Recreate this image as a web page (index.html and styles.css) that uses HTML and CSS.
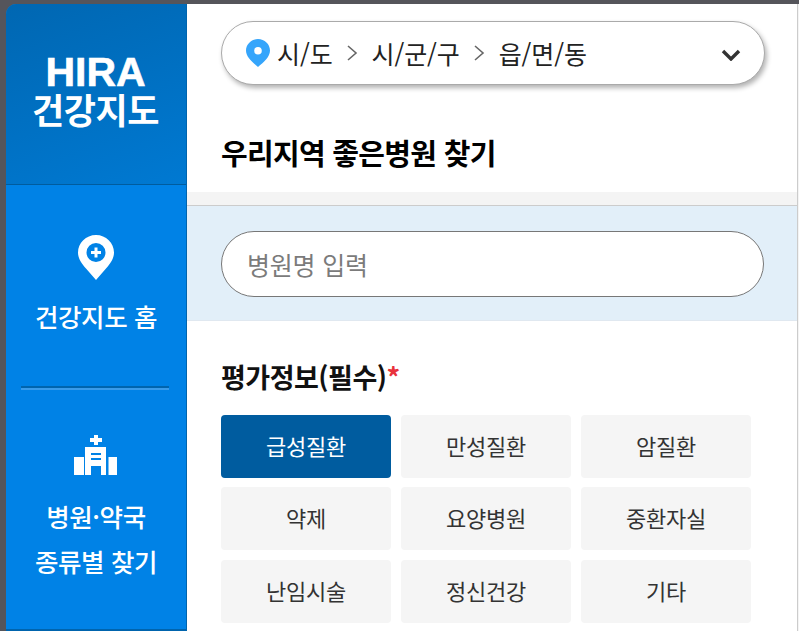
FILE: index.html
```html
<!DOCTYPE html>
<html lang="ko">
<head>
<meta charset="utf-8">
<title>HIRA 건강지도</title>
<link rel="stylesheet" href="styles.css">
</head>
<body>
<div class="window">
  <aside class="sidebar">
    <div class="brand">
      <div class="brand-en">HIRA</div>
      <div class="brand-ko">건강지도</div>
    </div>
    <nav class="nav">
      <a class="nav-item nav-home">
        <svg class="nav-pin" width="36" height="46" viewBox="0 0 36 46"><path fill="#fff" fill-rule="evenodd" d="M18 0C8 0 0 8 0 17.500C0 24 4 29 8 33.500L18 45L28 33.500C32 29 36 24 36 17.500C36 8 28 0 18 0ZM18 8A9.500 9.500 0 1 1 18 27A9.500 9.500 0 1 1 18 8Z"/><path fill="#fff" d="M16.500 12.500h3v3.500h3.500v3h-3.500v3.500h-3v-3.500h-3.500v-3h3.500z"/></svg>
        <span class="nav-label">건강지도 홈</span>
      </a>
      <div class="nav-rule"></div>
      <a class="nav-item nav-kind">
        <svg class="nav-hospital" width="44" height="40" viewBox="0 0 44 40"><path fill="#fff" fill-rule="evenodd" d="M20 0h4v3h4v4h-4v3h-4V7h-4V3h4zM11 12h21v28h-5V31H17v9h-6zM17 18v2h10v-2zM17 23v2h10v-2zM0 22h10v18H0zM34.500 22H43v18h-8.500z"/></svg>
        <span class="nav-label">병원·약국<br>종류별 찾기</span>
      </a>
    </nav>
  </aside>
  <main class="content">
    <section class="top">
      <div class="region">
        <svg class="region-pin" width="24" height="28" viewBox="0 0 24 28"><path fill="#35a5fb" fill-rule="evenodd" d="M12 0C5.400 0 0 5.200 0 11.600C0 18 6 23 12 28C18 23 24 18 24 11.600C24 5.200 18.600 0 12 0ZM12 8A3.800 3.800 0 1 1 12 15.600A3.800 3.800 0 1 1 12 8Z"/></svg>
        <span class="crumb">시/도</span>
        <svg class="sep" width="12" height="18" viewBox="0 0 12 18"><path d="M2 2l8 7-8 7" fill="none" stroke="#666" stroke-width="1.600"/></svg>
        <span class="crumb">시/군/구</span>
        <svg class="sep" width="12" height="18" viewBox="0 0 12 18"><path d="M2 2l8 7-8 7" fill="none" stroke="#666" stroke-width="1.600"/></svg>
        <span class="crumb">읍/면/동</span>
        <svg class="chevron" width="20" height="12" viewBox="0 0 20 12"><path d="M2 2l8 8 8-8" fill="none" stroke="#333" stroke-width="3.400"/></svg>
      </div>
      <h1 class="title">우리지역 좋은병원 찾기</h1>
    </section>
    <div class="gap-band"></div>
    <section class="search">
      <div class="search-box">병원명 입력</div>
    </section>
    <section class="eval">
      <h2 class="eval-title">평가정보(필수)<span class="req">*</span></h2>
      <div class="grid">
        <button class="chip chip-on">급성질환</button>
        <button class="chip">만성질환</button>
        <button class="chip">암질환</button>
        <button class="chip">약제</button>
        <button class="chip">요양병원</button>
        <button class="chip">중환자실</button>
        <button class="chip">난임시술</button>
        <button class="chip">정신건강</button>
        <button class="chip">기타</button>
      </div>
    </section>
  </main>
</div>
</body>
</html>
```

FILE: styles.css
```css
* { box-sizing: border-box; }
html, body { margin: 0; height: 100%; overflow: hidden; }
body {
  background: #55555b;
  font-family: "Noto Sans CJK KR", "Noto Sans", sans-serif;
}
.window {
  display: flex;
  height: 631px;
  padding: 4px 0 0 6px;
}
.sidebar {
  width: 181px;
  flex: none;
  height: 627px;
  display: flex;
  flex-direction: column;
  background: #0082e6;
  border-right: 1px solid #0064ad;
  border-bottom: 2px solid #0064ad;
  border-top-left-radius: 10px;
  overflow: hidden;
  color: #fff;
}
.brand {
  height: 181px;
  flex: none;
  background: linear-gradient(160deg, #0067b2, #0079d2);
  border-bottom: 1px solid #005c9e;
  text-align: center;
  padding-top: 47px;
  padding-right: 1px;
}
.brand-en {
  font-family: "Liberation Sans", sans-serif;
  font-weight: 700;
  font-size: 41px;
  line-height: 42px;
  -webkit-text-stroke: .6px #fff;
}
.brand-ko {
  font-size: 35px;
  font-weight: 700;
  line-height: 36px;
  letter-spacing: -.5px;
  margin-top: -2px;
}
.nav { flex: 1; display: flex; flex-direction: column; align-items: center; }
.nav-item { display: flex; flex-direction: column; align-items: center; }
.nav-home { padding-top: 50px; height: 201px; }
.nav-pin { display: block; }
.nav-label {
  font-size: 25.500px;
  font-weight: 500;
  line-height: 45px;
  text-align: center;
  letter-spacing: -.4px;
}
.nav-home .nav-label { margin-top: 12px; }
.nav-rule {
  width: 148px;
  height: 4px;
  flex: none;
  margin-right: 2px;
  background: linear-gradient(#0064ad 0 2px, #3a9bea 2px);
}
.nav-kind { padding-top: 45px; }
.nav-hospital { display: block; }
.nav-kind .nav-label { margin-top: 18px; }
.content {
  width: 611px;
  flex: none;
  background: #fff;
  border-right: 1px solid #ccc;
  box-shadow: 1px 0 0 #f4f4f4;
}
.top { height: 188px; padding: 17px 33px 0 34px; }
.region {
  width: 544px;
  height: 64px;
  display: flex;
  align-items: center;
  padding: 0 23px 0 24px;
  background: #fff;
  border: 1px solid #aaa;
  border-radius: 32px;
  box-shadow: 2px 3px 5px rgba(0,0,0,.3);
}
.crumb { font-size: 25px; line-height: 30px; color: #222; letter-spacing: -.1px; }
.region-pin { margin-right: 7px; }
.sep { margin: 0 14px 0 13px; }
.chevron { margin-left: auto; margin-top: 3px; }
.title {
  margin: 46px 0 0;
  font-size: 29px;
  line-height: 42px;
  font-weight: 700;
  color: #000;
  letter-spacing: -.7px;
}
.gap-band { height: 14px; background: #f4f4f4; border-bottom: 1px solid #ccc; }
.search {
  height: 115px;
  padding: 25px 33px 0 34px;
  background: #e2eff9;
  border-bottom: 1px solid #e0e8f0;
}
.search-box {
  height: 66px;
  width: 543px;
  padding-left: 25px;
  background: #fff;
  border: 1px solid #777;
  border-radius: 33px;
  font-size: 25px;
  line-height: 64px;
  color: #7b7b7b;
  letter-spacing: -.2px;
}
.eval { padding: 35px 46px 0 34px; }
.eval-title {
  margin: 0 0 17px;
  font-size: 27px;
  line-height: 42px;
  font-weight: 700;
  color: #111;
  letter-spacing: -.5px;
}
.req { color: #e8323c; }
.grid {
  display: grid;
  grid-template-columns: repeat(3, 170px);
  grid-template-rows: 63px 63px 64px;
  gap: 9px 10px;
}
.grid .chip:nth-child(n+7) { margin-top: 1px; }
.chip {
  border: 0;
  border-radius: 4px;
  background: #f5f5f5;
  color: #333;
  font: 400 22px/1 "Noto Sans CJK KR", sans-serif;
  letter-spacing: -.3px;
  padding: 0 0 3px;
}
.chip-on { background: #005c9f; color: #fff; }
```
